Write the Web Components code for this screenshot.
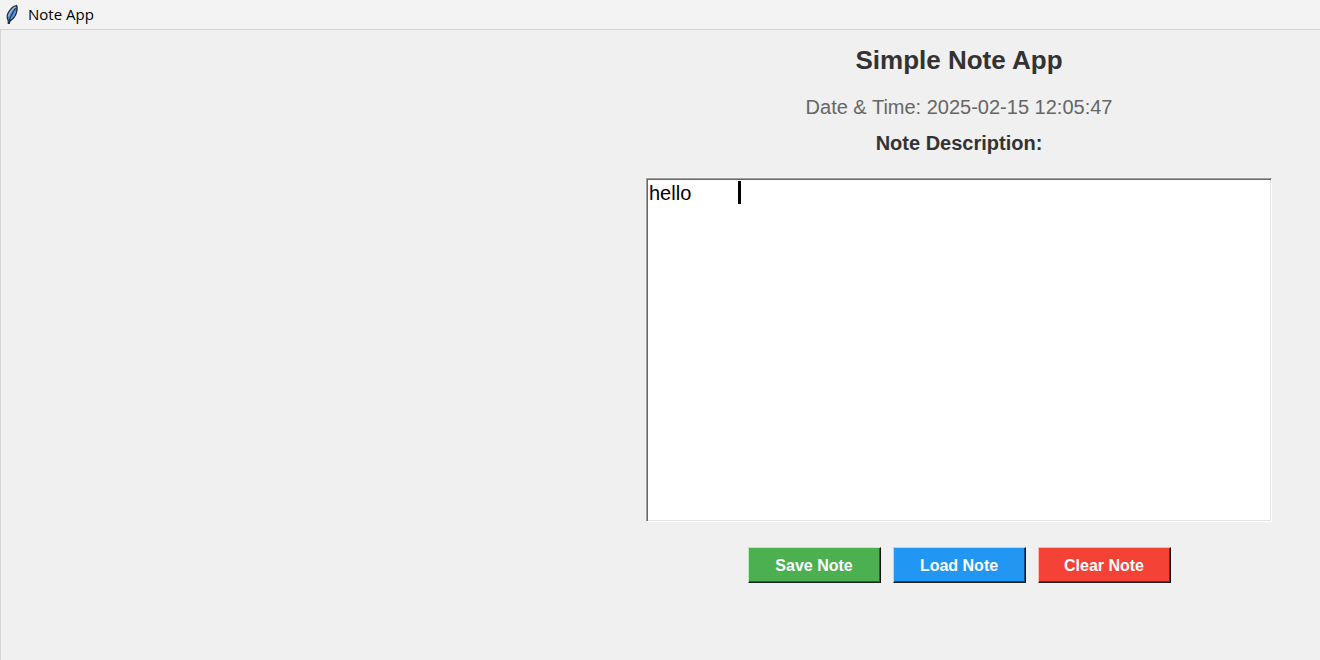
<!DOCTYPE html>
<html lang="en">
<head>
<meta charset="utf-8">
<title>Note App</title>
<style>
html, body { margin: 0; height: 100%; }
body { background: #f0f0f0; font-family: "Liberation Sans", Arial, sans-serif; color: #333; }
</style>
</head>
<body>
<note-window heading="Note App">
  <note-form heading="Simple Note App" time="2025-02-15 12:05:47" text="hello">
    <note-button style="--face:#4caf50;--light:#b4f0b6;--shade:#27632a">Save Note</note-button>
    <note-button style="--face:#2196f3;--light:#a4dcff;--shade:#0c4c83">Load Note</note-button>
    <note-button style="--face:#f44336;--light:#ffb8b0;--shade:#84201a">Clear Note</note-button>
  </note-form>
</note-window>

<template id="window-template">
<style>
:host { display: flex; flex-direction: column; min-height: 100%; box-sizing: border-box; }
header { display: flex; align-items: center; gap: 8px; height: 29px; padding-left: 4px; background: #f3f3f3; border-bottom: 1px solid #d5d3d8; font: 15px/20px "Open Sans", "Noto Sans", sans-serif; color: #000; box-sizing: content-box; }
svg { width: 16px; height: 22px; }
#heading { padding-bottom: 2px; }
main { flex: 1; display: flex; justify-content: flex-end; padding: 14px 48px 14px 14px; border-left: 1px solid #d5d3d8; }
</style>
<header>
  <svg viewBox="0 0 16 22" aria-hidden="true">
    <path d="M12.600 1.500C10 2 6.500 4.500 4.300 8.500C2.800 11.500 2.800 14 4.200 16.500L4.300 19.500L5.300 19.500L6.200 16.800C9 15 11.500 12 12.500 8.500C13.300 5.500 13.400 3 12.600 1.500Z" fill="#3f7fc8" stroke="#222a35" stroke-width="1.200"/>
    <path d="M11.500 3C8.500 5 6 8 4.300 12.500" fill="none" stroke="#a5b9cc" stroke-width="1.500"/>
    <path d="M11.500 4C8.500 9 6 13 4.800 19.500" fill="none" stroke="#1d2d45" stroke-width="1"/>
    <path d="M11.500 7C10.500 10 9 12.500 7 14.500" fill="none" stroke="#529be5" stroke-width="1.500"/>
  </svg>
  <span id="heading"></span>
</header>
<main><slot></slot></main>
</template>

<template id="form-template">
<style>
:host { display: block; width: 100%; max-width: 626px; }
form { display: flex; flex-direction: column; align-items: center; margin: 0; }
h1 { margin: 0; font-size: 26px; line-height: 32px; }
p { margin: 19px 0 0; font-size: 20px; line-height: 24px; color: #666; }
label { margin-top: 12px; font-size: 20px; line-height: 24px; font-weight: bold; }
.editor { position: relative; width: 100%; margin-top: 23px; }
textarea { display: block; box-sizing: border-box; width: 100%; height: 344px; padding: 2px; resize: none; outline: 0; border: 1px solid; border-color: #a0a0a0 #fff #fff #a0a0a0; border-radius: 0; background: #fff; color: #000; font: 20px/24px "Liberation Sans", Arial, sans-serif; box-shadow: inset 1px 1px #696969, inset -1px -1px #e3e3e3; }
.caret { position: absolute; left: 92px; top: 3px; width: 3px; height: 23px; background: #000; }
.actions { display: flex; gap: 12px; margin-top: 25px; }
</style>
<form>
  <h1></h1>
  <p>Date &amp; Time: <time></time></p>
  <label for="note">Note Description:</label>
  <div class="editor"><textarea id="note" spellcheck="false"></textarea><span class="caret"></span></div>
  <div class="actions"><slot></slot></div>
</form>
</template>

<template id="button-template">
<style>
:host { display: block; }
button { display: block; box-sizing: border-box; width: 133px; height: 36px; padding: 2px 0 0; border: 1px solid; border-color: var(--light) #111 #222 var(--light); border-radius: 0; background: var(--face); box-shadow: inset -1px -1px var(--shade); color: #fff; font: bold 16px/20px "Liberation Sans", Arial, sans-serif; }
</style>
<button type="button"><slot></slot></button>
</template>

<script>
function mount(host, id) {
  const root = host.attachShadow({ mode: "open" });
  root.append(document.getElementById(id).content.cloneNode(true));
  return root;
}
customElements.define("note-window", class extends HTMLElement {
  connectedCallback() {
    if (this.shadowRoot) return;
    mount(this, "window-template").getElementById("heading").textContent = this.getAttribute("heading");
  }
});
customElements.define("note-form", class extends HTMLElement {
  connectedCallback() {
    if (this.shadowRoot) return;
    const root = mount(this, "form-template");
    root.querySelector("h1").textContent = this.getAttribute("heading");
    root.querySelector("time").textContent = this.getAttribute("time");
    root.querySelector("textarea").value = this.getAttribute("text");
  }
});
customElements.define("note-button", class extends HTMLElement {
  connectedCallback() {
    if (!this.shadowRoot) mount(this, "button-template");
  }
});
</script>
</body>
</html>
